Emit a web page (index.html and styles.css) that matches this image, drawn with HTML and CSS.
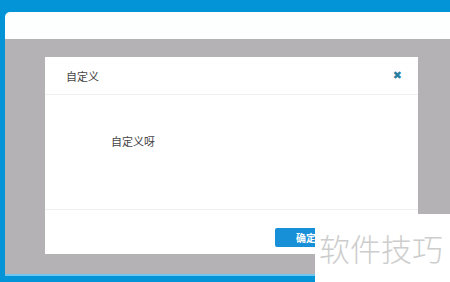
FILE: index.html
```html
<!DOCTYPE html>
<html>
<head>
<meta charset="utf-8">
<link rel="stylesheet" href="styles.css">
</head>
<body>
<div class="frame">
  <div class="topbar"></div>
  <div class="overlay">
    <div class="dialog">
      <div class="dlg-head">
        <span class="dlg-title">自定义</span>
        <span class="dlg-close">&#10006;</span>
      </div>
      <div class="dlg-body">自定义呀</div>
      <div class="dlg-foot">
        <button class="btn-ok">确定</button>
      </div>
    </div>
  </div>
</div>
<div class="watermark">软件技巧</div>
</body>
</html>
```

FILE: styles.css
```css
html, body {
  margin: 0;
  padding: 0;
  width: 450px;
  height: 282px;
  overflow: hidden;
  background: #0394d8;
  font-family: "Noto Sans CJK SC", "Liberation Sans", sans-serif;
}
.frame {
  margin: 12px 0 0 5px;
  width: 445px;
  height: 264px;
  border-top-left-radius: 5px;
  overflow: hidden;
  border-bottom: 2px solid #6cc6ee;
  box-sizing: border-box;
  display: flex;
  flex-direction: column;
}
.topbar {
  height: 27px;
  background: #fdfefe;
  flex: none;
}
.overlay {
  flex: 1;
  background: #b4b2b4;
  padding: 18px 0 0 40px;
}
.dialog {
  width: 373px;
  height: 197px;
  background: #fff;
  display: flex;
  flex-direction: column;
}
.dlg-head {
  height: 38px;
  border-bottom: 1px solid #f0f0f0;
  display: flex;
  align-items: center;
  justify-content: space-between;
  padding: 0 16px 0 21px;
  box-sizing: border-box;
  flex: none;
}
.dlg-title {
  font-size: 11px;
  color: #444;
}
.dlg-close {
  font-size: 11px;
  color: #2b7fa3;
  font-family: "DejaVu Sans", sans-serif;
  font-weight: bold;
}
.dlg-body {
  height: 115px;
  box-sizing: border-box;
  padding: 38px 0 0 66px;
  font-size: 11px;
  color: #444;
  border-bottom: 1px solid #f0f0f0;
  flex: none;
}
.dlg-foot {
  flex: 1;
  padding: 13px 0 0 230px;
}
.btn-ok {
  width: 62px;
  height: 19px;
  border: none;
  border-radius: 2px;
  background: #1890d8;
  color: #fff;
  font-size: 10px;
  font-weight: bold;
  padding: 0 0 0 0;
  text-align: center;
  font-family: "Noto Sans CJK SC", sans-serif;
  line-height: 19px;
}
.watermark {
  position: absolute;
  left: 315px;
  top: 214px;
  width: 135px;
  height: 68px;
  background: #fff;
  color: #cdcdcd;
  font-size: 31px;
  font-weight: 300;
  line-height: 68px;
  padding-left: 4px;
  box-sizing: border-box;
  font-family: "Noto Sans CJK SC", sans-serif;
}
```
